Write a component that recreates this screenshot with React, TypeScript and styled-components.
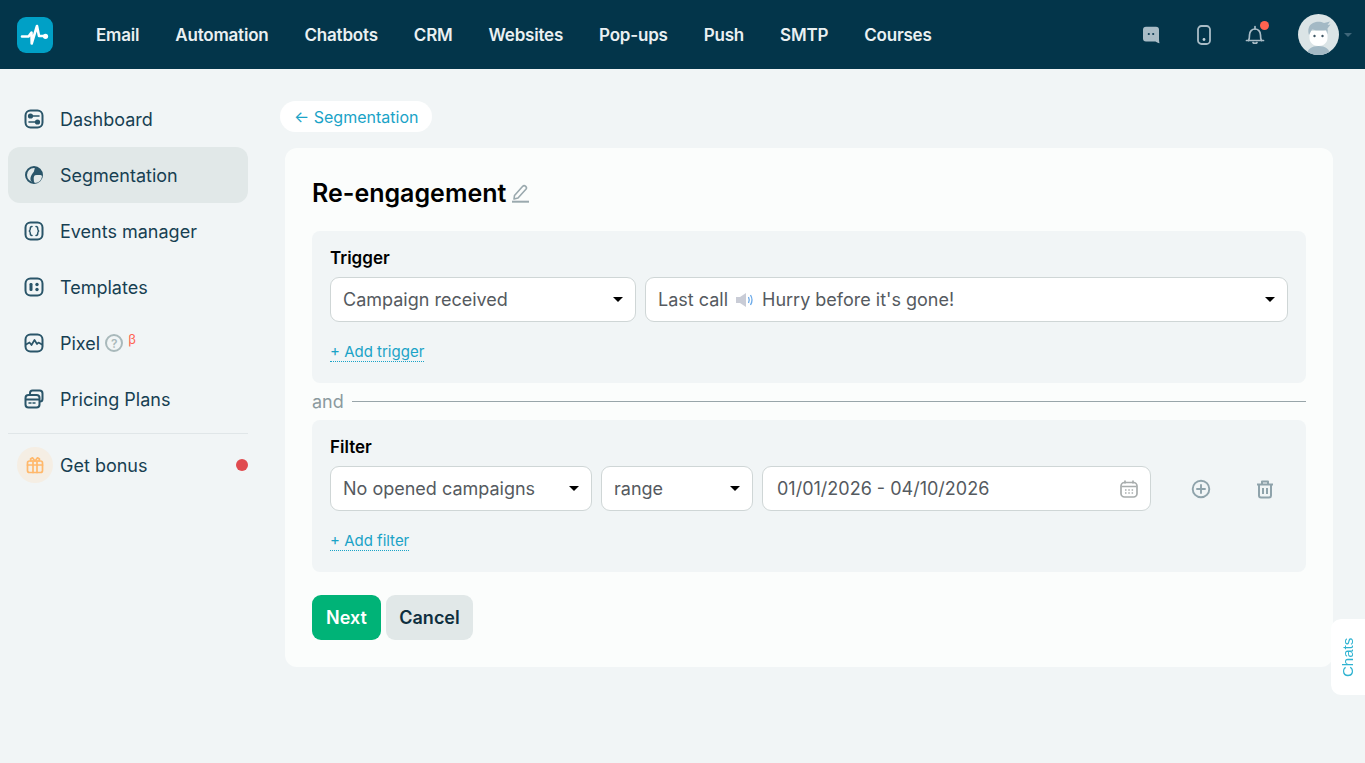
import styled, {createGlobalStyle} from 'styled-components';

const GlobalStyle = createGlobalStyle`
  html, body {
    margin: 0;
    padding: 0;
    background: #f1f5f6;
    font-family: Inter, 'Noto Sans', sans-serif;
  }
  * { box-sizing: border-box; }
`;

const NAV_LINKS = ['Email', 'Automation', 'Chatbots', 'CRM', 'Websites', 'Pop-ups', 'Push', 'SMTP', 'Courses'];

const Logo = () => (
  <LogoBox>
    <svg width="36" height="36" viewBox="0 0 36 36" fill="none">
      <path d="M5 19.5h6.5l3-4 .2 11L20 9l2 10h5" stroke="#fff" strokeWidth="2.6" strokeLinejoin="round" strokeLinecap="round" />
      <circle cx="28.5" cy="19.3" r="2.6" fill="#fff" />
    </svg>
  </LogoBox>
);

const iconStroke = '#2a5569';

const SIDE_ICONS: Record<string, React.ReactNode> = {
  dashboard: (
    <>
      <rect x="1.5" y="1.5" width="17" height="17" rx="5" />
      <path d="M5 7h10M5 13h10" strokeWidth="1.6" />
      <circle cx="6.5" cy="7" r="1.6" fill={iconStroke} />
      <circle cx="13.5" cy="13" r="1.6" fill={iconStroke} />
    </>
  ),
  segmentation: (
    <>
      <circle cx="10" cy="10" r="8" />
      <path d="M11 2.4c5 .3 7 3.600 6.800 7.600H13c-2 0-3.500 1.500-3.300 3.500l.3 4C5.500 17 6 13 7.500 10 9 7.500 11 6 11 2.400Z" fill={iconStroke} stroke="none" />
      <path d="M10.500 10.500h7.500c0 4.500-3 7.500-7.500 7.500Z" fill="#e1e8e8" stroke="none" />
      <path d="M11 2.500c4 .2 7 3.500 7 7.500h-6.500c-1 0-1.500-.5-1.500-1.500Z" fill={iconStroke} stroke="none" />
    </>
  ),
  events: (
    <>
      <rect x="1.5" y="1.5" width="17" height="17" rx="5" />
      <path d="M8 5.500c-1.500 0-1.700 1-1.700 2s0 1.800-1 2.500c1 .7 1 1.500 1 2.500s.2 2 1.700 2M12 5.500c1.500 0 1.700 1 1.700 2s0 1.800 1 2.500c-1 .7-1 1.500-1 2.500s-.2 2-1.700 2" strokeWidth="1.5" />
    </>
  ),
  templates: (
    <>
      <rect x="1.500" y="1.500" width="17" height="17" rx="5" />
      <rect x="5.500" y="6" width="3" height="8" rx="1.200" fill={iconStroke} stroke="none" />
      <circle cx="13" cy="7.500" r="1.700" fill={iconStroke} stroke="none" />
      <circle cx="13" cy="12.500" r="1.700" fill={iconStroke} stroke="none" />
    </>
  ),
  pixel: (
    <>
      <rect x="1.500" y="1.500" width="17" height="17" rx="5" />
      <path d="M2 11.500l3.500-2 2 2.500 3-5 2.500 4 1.500-1.500 3.500 2" strokeWidth="1.700" />
    </>
  ),
  pricing: (
    <>
      <path d="M6 4.500V4a2.500 2.500 0 0 1 2.500-2.500h7A3 3 0 0 1 18.500 4.500V10a2.500 2.500 0 0 1-2.500 2.500" />
      <rect x="1.500" y="6" width="14" height="12.500" rx="3" />
      <path d="M2 10.500h13" />
      <path d="M5 14h2M9 14h2" strokeWidth="1.500" />
    </>
  ),
};

const SideIcon = ({name}: {name: string}) => (
  <svg width="20" height="20" viewBox="0 0 20 20" fill="none" stroke={iconStroke} strokeWidth="2" strokeLinecap="round" strokeLinejoin="round">
    {SIDE_ICONS[name]}
  </svg>
);

const Caret = () => (
  <svg width="10" height="5" viewBox="0 0 10 5">
    <path d="M0 0h10L5 5Z" fill="#000" />
  </svg>
);

const Avatar = () => (
  <svg width="41" height="41" viewBox="0 0 41 41">
    <clipPath id="avatar-clip"><circle cx="20.500" cy="20.500" r="20.500" /></clipPath>
    <g clipPath="url(#avatar-clip)">
      <rect width="41" height="41" fill="#dbe4e6" />
      <path d="M9 41c0-6 5-9 11.500-9S32 35 32 41Z" fill="#a3b9c5" />
      <path d="M11.500 17h18v7c0 4.500-4 8-9 8s-9-3.500-9-8Z" fill="#fff" />
      <path d="M11 21c-1.500-5-.5-10 4-12 4-2 8-1.500 11 0l6-1.500-2.500 3.500 3-.5-3 4c0 1 .5 3 0 6l-1.500-4.500c-4 .5-10 .5-14-.5Z" fill="#a3b9c5" />
      <circle cx="16.500" cy="22" r="1.200" fill="#3d5563" />
      <circle cx="24.500" cy="22" r="1.200" fill="#3d5563" />
    </g>
  </svg>
);

const App = () => {
  return (
    <>
      <GlobalStyle />
      <Header>
        <Logo />
        <Nav>
          {NAV_LINKS.map((link) => (
            <NavLink key={link}>{link}</NavLink>
          ))}
        </Nav>
        <HeaderTools>
          <ToolIcon>
            <svg width="18" height="18" viewBox="0 0 18 18">
              <path d="M4 .8h10A3 3 0 0 1 17 3.800V13c0 1.500 .2 3 .5 4.200-1.500-.2-3-.9-4-1.700H4A3 3 0 0 1 1 12.500V3.800A3 3 0 0 1 4 .8Z" fill="#a9bcc6" />
              <circle cx="6.800" cy="8" r="1.100" fill="#0b3a52" />
              <circle cx="11.200" cy="8" r="1.100" fill="#0b3a52" />
            </svg>
          </ToolIcon>
          <ToolIcon>
            <svg width="14" height="20" viewBox="0 0 14 20" fill="none">
              <rect x="1" y="1" width="12" height="18" rx="3.500" stroke="#a9bcc6" strokeWidth="1.800" />
              <circle cx="7" cy="14.500" r="1.400" fill="#c4d2d9" />
            </svg>
          </ToolIcon>
          <BellWrap>
            <svg width="20" height="20" viewBox="0 0 20 20" fill="none" stroke="#a9bcc6" strokeWidth="1.700" strokeLinecap="round" strokeLinejoin="round">
              <path d="M1.500 15.500h17" />
              <path d="M3.500 15.500c1-1.500 1-3.500 1-5.500 0-3.500 2.500-6 5.500-6s5.500 2.500 5.500 6c0 2 0 4 1 5.500" />
              <path d="M10 1.500V4M8 17.500c.5 1 3.500 1 4 0" />
            </svg>
            <BellDot />
          </BellWrap>
          <AvatarWrap>
            <Avatar />
            <AvatarCaret />
          </AvatarWrap>
        </HeaderTools>
      </Header>

      <Page>
        <Sidebar>
          <SideItem><SideIcon name="dashboard" />Dashboard</SideItem>
          <SideItem $active><SideIcon name="segmentation" />Segmentation</SideItem>
          <SideItem><SideIcon name="events" />Events manager</SideItem>
          <SideItem><SideIcon name="templates" />Templates</SideItem>
          <SideItem>
            <SideIcon name="pixel" />
            <PixelLabel>
              Pixel
              <HelpMark>?</HelpMark>
              <Beta>β</Beta>
            </PixelLabel>
          </SideItem>
          <SideItem><SideIcon name="pricing" />Pricing Plans</SideItem>
          <SideDivider />
          <BonusRow>
            <BonusIcon>
              <svg width="18" height="18" viewBox="0 0 18 18" fill="none" stroke="#ffb86b" strokeWidth="1.700" strokeLinejoin="round" strokeLinecap="round">
                <rect x="1.500" y="5" width="15" height="11.500" rx="2" />
                <path d="M1.500 9h15M7 5v11.500M11 5v11.500" />
                <path d="M9 5 6.500 1.800 4.500 3 5 5M9 5l2.500-3.200 2 1.200L13 5" />
              </svg>
            </BonusIcon>
            <BonusText>Get bonus</BonusText>
            <BonusDot />
          </BonusRow>
        </Sidebar>

        <Main>
          <BackPill>← Segmentation</BackPill>
          <Card>
            <Title>
              Re-engagement
              <svg width="19" height="20" viewBox="0 0 19 20" fill="none" stroke="#9aa9ae" strokeWidth="1.600" strokeLinejoin="round">
                <path d="M3.500 12.500 11.500 3.500c1-1 2.200-1 3.200-.2 1 .9 1 2 .2 3L7 15l-4 1Z" />
                <path d="M1 18.700h17" strokeWidth="2" />
              </svg>
            </Title>

            <Panel>
              <PanelTitle>Trigger</PanelTitle>
              <FieldRow>
                <Select $width={306}>Campaign received<Caret /></Select>
                <Select $width={643}>
                  <SelectText>
                    Last call
                    <svg width="20" height="16" viewBox="0 0 20 16" fill="none">
                      <path d="M1 5h4l6-4v14l-6-4H1Z" fill="#c9ccd6" />
                      <path d="M13.500 5c1 2 1 4 0 6M15.500 3c1.800 3 1.800 7 0 10" stroke="#6aa9e9" strokeWidth="1.300" />
                    </svg>
                    Hurry before it's gone!
                  </SelectText>
                  <Caret />
                </Select>
              </FieldRow>
              <AddLink>+ Add trigger</AddLink>
            </Panel>

            <AndRow>and<AndLine /></AndRow>

            <Panel>
              <PanelTitle>Filter</PanelTitle>
              <FieldRow>
                <Select $width={262}>No opened campaigns<Caret /></Select>
                <Select $width={152}>range<Caret /></Select>
                <DateField>
                  01/01/2026 - 04/10/2026
                  <svg width="20" height="20" viewBox="0 0 20 20" fill="none" stroke="#a8adad" strokeWidth="1.700">
                    <rect x="2" y="3.500" width="16" height="14.500" rx="3.500" />
                    <path d="M2.500 7.500h15M6 1.500v3M14 1.500v3" />
                    <path d="M6 11h1.500M9.300 11h1.500M12.600 11h1.500M6 14h1.500M9.300 14h1.500M12.600 14h1.500" strokeWidth="1.500" />
                  </svg>
                </DateField>
                <RowActions>
                  <svg width="20" height="20" viewBox="0 0 20 20" fill="none" stroke="#8fa3ab" strokeWidth="1.900" strokeLinecap="round">
                    <circle cx="10" cy="10" r="8.300" />
                    <path d="M10 6v8M6 10h8" />
                  </svg>
                  <svg width="20" height="20" viewBox="0 0 20 20" fill="none" stroke="#8fa3ab" strokeWidth="2" strokeLinejoin="round">
                    <path d="M2 5.500h16M7 5V2.500h6V5" />
                    <path d="M4 6v10.500A2 2 0 0 0 6 18.500h8a2 2 0 0 0 2-2V6" />
                    <path d="M8 9v6M12 9v6" />
                  </svg>
                </RowActions>
              </FieldRow>
              <AddLink>+ Add filter</AddLink>
            </Panel>

            <Buttons>
              <NextButton>Next</NextButton>
              <CancelButton>Cancel</CancelButton>
            </Buttons>
          </Card>
        </Main>
      </Page>

      <ChatsTab>Chats</ChatsTab>
    </>
  );
};

export default App;

const Header = styled.header`
  height: 69px;
  background-color: #03354a;
  display: flex;
  align-items: center;
  padding-left: 17px;
`;

const LogoBox = styled.div`
  width: 36px;
  height: 36px;
  border-radius: 9px;
  background-color: #00a0c6;
  flex-shrink: 0;
  svg { display: block; }
`;

const Nav = styled.nav`
  display: flex;
  gap: 36px;
  margin-left: 43px;
`;

const NavLink = styled.a`
  font-size: 17px;
  font-weight: 600;
  color: #eaf0f2;
  letter-spacing: -0.2px;
`;

const HeaderTools = styled.div`
  margin-left: auto;
  display: flex;
  align-items: center;
  padding-right: 13px;
`;

const ToolIcon = styled.div`
  width: 53px;
  display: flex;
  justify-content: center;
  svg { display: block; }
`;

const BellWrap = styled(ToolIcon)`
  position: relative;
  width: 50px;
`;

const BellDot = styled.span`
  position: absolute;
  top: -4px;
  right: 11px;
  width: 9px;
  height: 9px;
  border-radius: 50%;
  background-color: #ff6350;
`;

const AvatarWrap = styled.div`
  display: flex;
  align-items: center;
  gap: 5px;
  margin-left: 18px;
  svg { display: block; }
`;

const AvatarCaret = styled.span`
  width: 0;
  height: 0;
  border-left: 4px solid transparent;
  border-right: 4px solid transparent;
  border-top: 4px solid #3f6679;
`;

const Page = styled.div`
  display: flex;
  min-height: 694px;
  background-color: #f1f5f6;
`;

const Sidebar = styled.aside`
  width: 240px;
  margin-left: 8px;
  padding-top: 22px;
  flex-shrink: 0;
  display: flex;
  flex-direction: column;
`;

const SideItem = styled.div<{$active?: boolean}>`
  height: 56px;
  border-radius: 12px;
  padding-left: 16px;
  display: flex;
  align-items: center;
  gap: 16px;
  font-size: 18px;
  color: #173f52;
  background-color: ${({$active}) => ($active ? '#e1e8e8' : 'transparent')};
  svg { flex-shrink: 0; }
`;

const PixelLabel = styled.span`
  display: flex;
  align-items: center;
`;

const HelpMark = styled.span`
  width: 18px;
  height: 18px;
  margin-left: 5px;
  border: 2px solid #a9b9bb;
  border-radius: 50%;
  color: #a9b9bb;
  font-size: 12px;
  font-weight: 600;
  display: flex;
  align-items: center;
  justify-content: center;
`;

const Beta = styled.sup`
  font-size: 13px;
  color: #ff6350;
  margin: -9px 0 0 5px;
`;

const SideDivider = styled.div`
  height: 1px;
  background-color: #e0e6e8;
  margin-top: 6px;
`;

const BonusRow = styled.div`
  display: flex;
  align-items: center;
  padding-left: 9px;
  margin-top: 13px;
`;

const BonusIcon = styled.span`
  width: 36px;
  height: 36px;
  border-radius: 50%;
  background-color: #f5eee4;
  display: flex;
  align-items: center;
  justify-content: center;
`;

const BonusText = styled.span`
  margin-left: 7px;
  font-size: 18px;
  color: #173f52;
`;

const BonusDot = styled.span`
  margin-left: auto;
  width: 12px;
  height: 12px;
  border-radius: 50%;
  background-color: #e04b4f;
`;

const Main = styled.main`
  flex: 1;
  padding: 32px 32px 0 32px;
`;

const BackPill = styled.a`
  display: inline-flex;
  align-items: center;
  height: 31px;
  padding: 0 14px;
  border-radius: 16px;
  background-color: #fff;
  color: #1aa3c7;
  font-size: 16px;
`;

const Card = styled.section`
  margin: 16px 0 0 5px;
  height: 519px;
  padding: 27px;
  border-radius: 12px;
  background-color: #fbfdfc;
`;

const Title = styled.h1`
  margin: 0 0 21px;
  height: 35px;
  display: flex;
  align-items: center;
  gap: 5px;
  font-size: 25px;
  font-weight: 600;
  color: #000;
`;

const Panel = styled.div`
  height: 152px;
  padding: 17px 18px 0;
  border-radius: 8px;
  background-color: #f1f5f6;
`;

const PanelTitle = styled.div`
  font-size: 17px;
  font-weight: 600;
  line-height: 20px;
  color: #000;
  margin-bottom: 9px;
`;

const FieldRow = styled.div`
  display: flex;
  gap: 9px;
`;

const Select = styled.div<{$width: number}>`
  width: ${({$width}) => $width}px;
  height: 45px;
  padding: 0 12px;
  display: flex;
  align-items: center;
  justify-content: space-between;
  border: 1px solid #cfd6d6;
  border-radius: 9px;
  background-color: #fff;
  font-size: 18px;
  color: #555a60;
`;

const SelectText = styled.span`
  display: flex;
  align-items: center;
  gap: 7px;
`;

const DateField = styled(Select).attrs({$width: 389})`
  padding: 0 11px 0 14px;
`;

const RowActions = styled.div`
  margin-left: 31px;
  display: flex;
  align-items: center;
  gap: 44px;
  svg { display: block; }
`;

const AddLink = styled.a`
  display: table;
  margin-top: 21px;
  font-size: 15px;
  line-height: 18px;
  color: #1aa3c7;
  border-bottom: 1px dotted #1aa3c7;
`;

const AndRow = styled.div`
  height: 37px;
  display: flex;
  align-items: center;
  gap: 8px;
  font-size: 18px;
  color: #8b9a9f;
`;

const AndLine = styled.div`
  flex: 1;
  height: 1px;
  background-color: #98a5a9;
`;

const Buttons = styled.div`
  display: flex;
  gap: 5px;
  margin-top: 23px;
`;

const NextButton = styled.button`
  width: 69px;
  height: 45px;
  border: 0;
  border-radius: 9px;
  background-color: #00b377;
  color: #fff;
  font: 600 18px Inter, 'Noto Sans', sans-serif;
`;

const CancelButton = styled(NextButton)`
  width: 87px;
  background-color: #e1e8e8;
  color: #0e2f3f;
`;

const ChatsTab = styled.div`
  position: fixed;
  right: 0;
  top: 619px;
  width: 34px;
  height: 76px;
  border-radius: 10px 0 0 10px;
  background-color: #fff;
  display: flex;
  align-items: center;
  justify-content: center;
  writing-mode: vertical-rl;
  transform-origin: center;
  font-family: 'Liberation Sans', sans-serif;
  font-size: 15px;
  color: #2fb3d1;

  span, & { text-orientation: mixed; }
  rotate: 180deg;
  border-radius: 0 10px 10px 0;
`;
